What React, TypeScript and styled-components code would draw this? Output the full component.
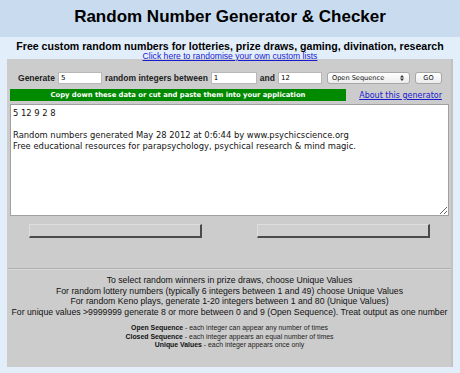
import styled, { createGlobalStyle } from "styled-components";

const GlobalStyle = createGlobalStyle`
  html, body {
    margin: 0;
    padding: 0;
    background: #e2effb;
  }
  body {
    font-family: "Liberation Sans", Arial, sans-serif;
    color: #000;
  }
`;

const Header = styled.header`
  height: 37px;
  background: #c8dbef;
  display: flex;
  align-items: center;
  justify-content: center;
`;

const Title = styled.h1`
  margin: 0 0 4px;
  font-size: 17px;
  font-weight: bold;
`;

const Intro = styled.div`
  text-align: center;
  padding-top: 3px;
  height: 19px;
  font-size: 9px;
  line-height: 9px;
`;

const Subtitle = styled.div`
  font-size: 10.6px;
  font-weight: bold;
  line-height: 12px;
`;

const Link = styled.a<{ $size?: number }>`
  color: #1a1ad0;
  text-decoration: underline;
  font-size: ${(p) => p.$size ?? 8.6}px;
  line-height: 9px;
`;

const Panel = styled.main`
  margin: 0 7px;
  height: 308px;
  box-sizing: border-box;
  background: #cccccc;
  border-right: 2px solid #c2c2c2;
  padding: 13px 2px 0 3px;
`;

const FormRow = styled.div`
  display: flex;
  align-items: center;
  justify-content: center;
  gap: 3px;
  height: 12px;
  padding-left: 1px;
`;

const Label = styled.span`
  font-size: 8.5px;
  font-weight: bold;
  color: #222;
`;

const NumInput = styled.input<{ $w: number }>`
  width: ${(p) => p.$w}px;
  height: 12px;
  box-sizing: border-box;
  border: 1px solid #b8b8b8;
  background: #fff;
  font-family: "DejaVu Sans", sans-serif;
  font-size: 7px;
  padding: 0 2px;
  margin: 0;
  outline: none;
`;

const SelectWrap = styled.div`
  position: relative;
  margin-left: 2px;
  height: 12px;
`;

const Select = styled.select`
  appearance: none;
  display: block;
  width: 83px;
  height: 12px;
  box-sizing: border-box;
  border: 1px solid #a8a8a8;
  border-radius: 3px;
  background: linear-gradient(#ffffff, #ececec);
  font-family: "DejaVu Sans", sans-serif;
  font-size: 6.6px;
  padding: 0 0 0 4px;
  margin: 0;
  color: #111;
`;

const SelectArrows = styled.svg`
  position: absolute;
  right: 6px;
  top: 3px;
  pointer-events: none;
`;

const GoButton = styled.button`
  width: 27px;
  height: 12px;
  box-sizing: border-box;
  border: 1px solid #a8a8a8;
  border-radius: 3px;
  background: linear-gradient(#ffffff, #ececec);
  font-family: "DejaVu Sans", sans-serif;
  font-size: 6.6px;
  padding: 0;
  margin-left: 2px;
  color: #111;
`;

const NoticeRow = styled.div`
  display: flex;
  align-items: center;
  justify-content: space-between;
  margin-top: 5px;
  height: 12px;
`;

const Notice = styled.div`
  width: 336px;
  height: 12px;
  background: #008a00;
  color: #fff;
  font-family: "DejaVu Sans", sans-serif;
  font-weight: bold;
  font-size: 6.8px;
  line-height: 12px;
  text-align: center;
`;

const AboutLink = styled(Link)`
  margin-right: 7px;
  font-family: "DejaVu Sans", sans-serif;
`;

const Output = styled.textarea`
  display: block;
  margin-top: 3px;
  width: 439px;
  height: 112px;
  box-sizing: border-box;
  border: 1px solid #a0a0a0;
  background: #fff;
  font-family: "DejaVu Sans", sans-serif;
  font-size: 8.4px;
  line-height: 11px;
  padding: 3px 2px;
  color: #111;
  outline: none;
`;

const ButtonRow = styled.div`
  display: flex;
  justify-content: center;
  gap: 55px;
  margin-top: 8px;
`;

const BlankButton = styled.button`
  width: 173px;
  height: 14px;
  box-sizing: border-box;
  background: #cfcfcf;
  border-style: solid;
  border-width: 1px 2px 2px 1px;
  border-color: #dedede #4a4a4a #4a4a4a #dedede;
  padding: 0;
`;

const Divider = styled.hr`
  margin: 30px -2px 0 -2px;
  border: 0;
  border-top: 1px solid #b0b0b0;
  border-bottom: 1px solid #d8d8d8;
`;

const Tips = styled.div`
  margin-top: 5px;
  text-align: center;
  font-size: 8.7px;
  line-height: 10.5px;
  color: #111;
  white-space: nowrap;
`;

const Legend = styled.div`
  margin-top: 7px;
  text-align: center;
  font-size: 6.9px;
  line-height: 8.5px;
  color: #222;

  b {
    color: #111;
  }
`;

const outputText = `5 12 9 2 8

Random numbers generated May 28 2012 at 0:6:44 by www.psychicscience.org
Free educational resources for parapsychology, psychical research & mind magic.`;

export default function App() {
  return (
    <>
      <GlobalStyle />
      <Header>
        <Title>Random Number Generator &amp; Checker</Title>
      </Header>
      <Intro>
        <Subtitle>
          Free custom random numbers for lotteries, prize draws, gaming,
          divination, research
        </Subtitle>
        <Link href="#">Click here to randomise your own custom lists</Link>
      </Intro>
      <Panel>
        <FormRow>
          <Label>Generate</Label>
          <NumInput $w={44} defaultValue="5" />
          <Label>random integers between</Label>
          <NumInput $w={46} defaultValue="1" />
          <Label>and</Label>
          <NumInput $w={44} defaultValue="12" />
          <SelectWrap>
            <Select defaultValue="open">
              <option value="open">Open Sequence</option>
              <option value="closed">Closed Sequence</option>
              <option value="unique">Unique Values</option>
            </Select>
            <SelectArrows width="4" height="6" viewBox="0 0 4 6">
              <path d="M0 2.4 L2 0 L4 2.4 Z M0 3.6 L2 6 L4 3.6 Z" fill="#333" />
            </SelectArrows>
          </SelectWrap>
          <GoButton>GO</GoButton>
        </FormRow>
        <NoticeRow>
          <Notice>
            Copy down these data or cut and paste them into your application
          </Notice>
          <AboutLink href="#" $size={8}>
            About this generator
          </AboutLink>
        </NoticeRow>
        <Output readOnly value={outputText} />
        <ButtonRow>
          <BlankButton />
          <BlankButton />
        </ButtonRow>
        <Divider />
        <Tips>
          To select random winners in prize draws, choose Unique Values
          <br />
          For random lottery numbers (typically 6 integers between 1 and 49)
          choose Unique Values
          <br />
          For random Keno plays, generate 1-20 integers between 1 and 80 (Unique
          Values)
          <br />
          For unique values &gt;9999999 generate 8 or more between 0 and 9 (Open
          Sequence). Treat output as one number
        </Tips>
        <Legend>
          <b>Open Sequence</b> - each integer can appear any number of times
          <br />
          <b>Closed Sequence</b> - each integer appears an equal number of times
          <br />
          <b>Unique Values</b> - each integer appears once only
        </Legend>
      </Panel>
    </>
  );
}
